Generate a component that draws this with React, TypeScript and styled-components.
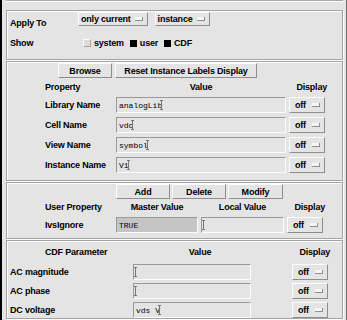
import React from 'react';
import styled, { createGlobalStyle } from 'styled-components';

const GlobalStyle = createGlobalStyle`
  html, body {
    margin: 0;
    padding: 0;
    background: #e4e4e4;
  }
  body {
    font-family: "Liberation Sans", Arial, sans-serif;
  }
`;

const BG = '#e4e4e4';
const LIGHT = '#fcfcfc';
const SHADE = '#8e8e8e';

const Window = styled.div`
  width: 347px;
  height: 320px;
  box-sizing: border-box;
  overflow: hidden;
  background: ${BG};
  border-left: 2px solid #000;
  border-right: 1px solid #6e6e6e;
  padding: 0 3px 0 4px;
  display: flex;
  flex-direction: column;
  font-size: 9px;
  font-weight: bold;
  letter-spacing: -0.2px;
  color: #000;
`;

const TopEdge = styled.div`
  height: 1px;
  flex: none;
  background: #aaaaaa;
  box-shadow: 0 1px 0 ${LIGHT};
  margin-bottom: 9px;
`;

// etched group box
const Frame = styled.div<{ $h?: number }>`
  box-sizing: border-box;
  flex: none;
  height: ${(p) => (p.$h ? `${p.$h}px` : 'auto')};
  border: 1px solid #a4a4a4;
  box-shadow: inset 1px 1px 0 ${LIGHT}, 1px 1px 0 ${LIGHT};
  margin-bottom: 1px;
`;

const Raised = styled.div`
  box-sizing: border-box;
  background: ${BG};
  border: 1px solid;
  border-color: ${LIGHT} ${SHADE} ${SHADE} ${LIGHT};
`;

const Button = styled(Raised)<{ $w: number }>`
  width: ${(p) => p.$w}px;
  height: 15px;
  display: flex;
  align-items: center;
  justify-content: center;
  line-height: 12px;
`;

const Cycle = styled(Raised)<{ $w?: number }>`
  height: ${(p) => (p.$w ? 16 : 14)}px;
  width: ${(p) => (p.$w ? `${p.$w}px` : 'auto')};
  display: flex;
  align-items: center;
  justify-content: space-between;
  gap: 4px;
  padding: 0 4px 0 ${(p) => (p.$w ? 5 : 2)}px;
  line-height: 12px;
`;

const Mark = styled.span`
  display: block;
  width: 7px;
  height: 3px;
  background: #f6f6f6;
  border-right: 1px solid ${SHADE};
  border-bottom: 1px solid ${SHADE};
`;

const Field = styled.div<{ $dim?: boolean }>`
  box-sizing: border-box;
  height: 16px;
  display: flex;
  align-items: center;
  padding: 0 2px;
  background: ${(p) => (p.$dim ? '#c5c5c5' : BG)};
  border: 1px solid;
  border-color: #9a9a9a ${LIGHT} ${LIGHT} #9a9a9a;
  font-family: "Liberation Mono", "Courier New", monospace;
  font-weight: normal;
  font-size: 8px;
  letter-spacing: 0;
  white-space: pre;
`;

const Caret = styled.span`
  position: relative;
  display: inline-block;
  width: 1px;
  height: 10px;
  margin-left: -1px;
  background: #777;
  &::before,
  &::after {
    content: '';
    position: absolute;
    left: -1px;
    width: 3px;
    height: 1px;
    background: #777;
  }
  &::before { top: 0; }
  &::after { bottom: 0; }
`;

const Label = styled.div`
  line-height: 12px;
  white-space: nowrap;
`;

/* ---- frame 1 ---- */
const ApplyRow = styled.div`
  display: flex;
  height: 14px;
  padding: 1px 0 0 3px;
  gap: 7px;
`;

const SideLabel = styled(Label)<{ $top?: number }>`
  width: 61px;
  margin-top: ${(p) => p.$top ?? 0}px;
`;

const ShowRow = styled.div`
  display: flex;
  align-items: center;
  height: 12px;
  margin-top: 11px;
  padding-left: 3px;
`;

const Check = styled.span<{ $on?: boolean; $first?: boolean }>`
  display: block;
  box-sizing: border-box;
  width: ${(p) => (p.$on ? 7 : 8)}px;
  height: ${(p) => (p.$on ? 7 : 8)}px;
  margin: 0 3px 0 ${(p) => (p.$first ? 12 : 6)}px;
  background: ${(p) => (p.$on ? '#000' : '#dcdcdc')};
  border: 1px solid;
  border-color: ${(p) => (p.$on ? '#000' : `${LIGHT} #a8a8a8 #a8a8a8 ${LIGHT}`)};
`;

/* ---- shared table pieces ---- */
const ButtonRow = styled.div<{ $left: number; $gap: number }>`
  display: flex;
  gap: ${(p) => p.$gap}px;
  padding: 1px 0 0 ${(p) => p.$left}px;
`;

const Table = styled.div<{ $cols: string; $left: number; $top: number; $gap: number }>`
  display: grid;
  grid-template-columns: ${(p) => p.$cols};
  grid-auto-rows: 16px;
  column-gap: 3px;
  row-gap: ${(p) => p.$gap}px;
  padding-left: ${(p) => p.$left}px;
  margin-top: ${(p) => p.$top}px;
  align-items: center;
`;

const Header = styled.div<{ $cols: string; $left: number; $top: number }>`
  display: grid;
  grid-template-columns: ${(p) => p.$cols};
  column-gap: 3px;
  height: 11px;
  padding-left: ${(p) => p.$left}px;
  margin-top: ${(p) => p.$top}px;
  line-height: 11px;
`;

const Head = styled.div<{ $align?: string; $shift?: number }>`
  justify-self: ${(p) => p.$align ?? 'start'};
  white-space: nowrap;
  padding-left: ${(p) => p.$shift ?? 0}px;
`;

const DisplayHead = styled(Head)`
  justify-self: end;
  margin-right: -2px;
`;

const Off = () => (
  <Cycle $w={36}>
    off
    <Mark />
  </Cycle>
);

const Text = ({ value }: { value: string }) => (
  <Field>
    {value}
    <Caret />
  </Field>
);

const propCols = '68px 170px 36px';
const userCols = '68px 82px 83px 36px';
const cdfCols = '120px 118px 35px 36px';

export default function App() {
  const props = [
    ['Library Name', 'analogLib'],
    ['Cell Name', 'vdc'],
    ['View Name', 'symbol'],
    ['Instance Name', 'V1'],
  ];
  const cdf = [
    ['AC magnitude', ''],
    ['AC phase', ''],
    ['DC voltage', 'vds V'],
  ];

  return (
    <>
      <GlobalStyle />
      <Window>
        <TopEdge />

        <Frame $h={50}>
          <ApplyRow>
            <SideLabel $top={5}>Apply To</SideLabel>
            <Cycle>
              only current
              <Mark />
            </Cycle>
            <Cycle>
              instance
              <Mark />
            </Cycle>
          </ApplyRow>
          <ShowRow>
            <SideLabel>Show</SideLabel>
            <Check $first />
            <Label>system</Label>
            <Check $on />
            <Label>user</Label>
            <Check $on />
            <Label>CDF</Label>
          </ShowRow>
        </Frame>

        <Frame $h={120}>
          <ButtonRow $left={51} $gap={3}>
            <Button $w={54}>Browse</Button>
            <Button $w={142}>Reset Instance Labels Display</Button>
          </ButtonRow>
          <Header $cols={propCols} $left={38} $top={4}>
            <Head>Property</Head>
            <Head $align="center">Value</Head>
            <DisplayHead>Display</DisplayHead>
          </Header>
          <Table $cols={propCols} $left={38} $top={4} $gap={4}>
            {props.map(([name, value]) => (
              <React.Fragment key={name}>
                <Label>{name}</Label>
                <Text value={value} />
                <Off />
              </React.Fragment>
            ))}
          </Table>
        </Frame>

        <Frame $h={57}>
          <ButtonRow $left={109} $gap={2}>
            <Button $w={54}>Add</Button>
            <Button $w={54}>Delete</Button>
            <Button $w={55}>Modify</Button>
          </ButtonRow>
          <Header $cols={userCols} $left={38} $top={3}>
            <Head>User Property</Head>
            <Head $align="center">Master Value</Head>
            <Head $align="center">Local Value</Head>
            <DisplayHead>Display</DisplayHead>
          </Header>
          <Table $cols={userCols} $left={38} $top={4} $gap={4}>
            <Label>IvsIgnore</Label>
            <Field $dim>TRUE</Field>
            <Text value="" />
            <Off />
          </Table>
        </Frame>

        <Frame>
          <Header $cols={cdfCols} $left={3} $top={6}>
            <Head $shift={35}>CDF Parameter</Head>
            <Head $align="center" $shift={16}>Value</Head>
            <div />
            <DisplayHead>Display</DisplayHead>
          </Header>
          <Table $cols={cdfCols} $left={3} $top={6} $gap={3}>
            {cdf.map(([name, value]) => (
              <React.Fragment key={name}>
                <Label>{name}</Label>
                <Text value={value} />
                <div />
                <Off />
              </React.Fragment>
            ))}
          </Table>
        </Frame>
      </Window>
    </>
  );
}
